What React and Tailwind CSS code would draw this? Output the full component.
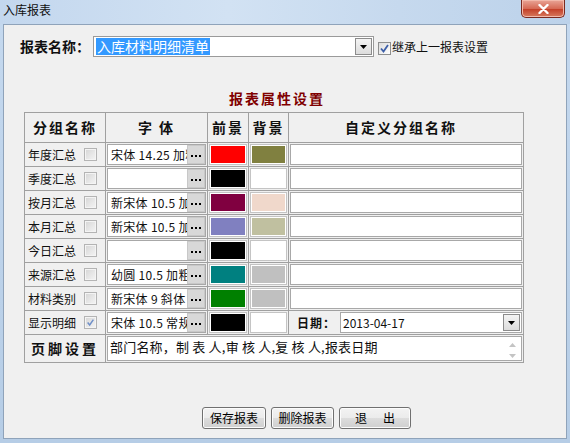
import React from "react";

const FONT = { fontFamily: '"Noto Sans CJK SC", "Liberation Sans", sans-serif' };

const rows = [
  { name: "年度汇总", font: "宋体 14.25 加粗", fg: "bg-[#ff0000]", bg: "bg-[#808040]" },
  { name: "季度汇总", font: "", fg: "bg-black", bg: "bg-white" },
  { name: "按月汇总", font: "新宋体 10.5 加粗", fg: "bg-[#800040]", bg: "bg-[#f0d8cb]" },
  { name: "本月汇总", font: "新宋体 10.5 加粗", fg: "bg-[#8080c0]", bg: "bg-[#c0c0a0]" },
  { name: "今日汇总", font: "", fg: "bg-black", bg: "bg-white" },
  { name: "来源汇总", font: "幼圆 10.5 加粗", fg: "bg-[#008080]", bg: "bg-[#c0c0c0]" },
  { name: "材料类别", font: "新宋体 9 斜体", fg: "bg-[#008000]", bg: "bg-[#c0c0c0]" },
  { name: "显示明细", font: "宋体 10.5 常规", fg: "bg-black", bg: "bg-white", checked: true, date: true },
];

function CheckMark({ color }) {
  return (
    <svg width="11" height="11" viewBox="0 0 11 11">
      <path d="M2 5.5 L4.5 8.5 L9 2" fill="none" stroke={color} strokeWidth="1.8" />
    </svg>
  );
}

function Check({ checked, dim }) {
  if (dim) {
    return (
      <span className="inline-flex w-[13px] h-[13px] shrink-0 items-center justify-center border border-[#b4b4b4] bg-[#f4f4f4]">
        <span className="flex w-[9px] h-[9px] items-center justify-center bg-[linear-gradient(135deg,#d8d8d8,#f2f2f2)]">
          {checked ? <CheckMark color="#6f8fc8" /> : null}
        </span>
      </span>
    );
  }
  return (
    <span className="inline-flex w-[13px] h-[13px] shrink-0 items-center justify-center border border-[#8e8f8f] bg-white">
      <span className="flex w-[11px] h-[11px] items-center justify-center bg-[linear-gradient(135deg,#dcdcdc,#ffffff)]">
        {checked ? <CheckMark color="#3d5fa8" /> : null}
      </span>
    </span>
  );
}

function DropArrow() {
  return (
    <svg width="7" height="4" viewBox="0 0 7 4">
      <path d="M0 0 H7 L3.5 4 Z" fill="#000" />
    </svg>
  );
}

function DropBtn() {
  return (
    <span className="flex w-[17px] h-[17px] items-center justify-center border border-[#8c8c8c] bg-[linear-gradient(to_bottom,#f4f4f4,#dcdcdc)]">
      <DropArrow />
    </span>
  );
}

function Dots() {
  return (
    <span className="flex w-[18px] h-[19px] shrink-0 items-center justify-center gap-[2px] border border-[#c8c8c8] bg-[#d8d8d8] pt-[3px]">
      <span className="w-[2px] h-[2px] bg-black" />
      <span className="w-[2px] h-[2px] bg-black" />
      <span className="w-[2px] h-[2px] bg-black" />
    </span>
  );
}

function Btn({ w, children }) {
  return (
    <button className={"flex h-[22px] items-center justify-center rounded-[3px] border border-[#707070] bg-[linear-gradient(to_bottom,#f3f3f3_0%,#ebebeb_50%,#dddddd_51%,#cfcfcf_100%)] text-[12px] text-black shadow-[inset_0_0_0_1px_#fcfcfc] " + w}>
      {children}
    </button>
  );
}

const headCls = "flex items-center justify-center bg-[#f0f0f0] text-[14px] font-bold tracking-[2px] text-[#101010]";

export default function App() {
  return (
    <div style={FONT} className="flex w-[570px] h-[443px] flex-col bg-[linear-gradient(to_bottom,#c5d9ef,#b6cde6)] overflow-hidden">
      {/* Title bar */}
      <div className="flex h-[24px] shrink-0 items-start bg-[linear-gradient(to_right,#c3d7ee,#d2e2f3_40%,#c6d9ee_70%,#bcd2ea)]">
        <span className="pl-[3px] pt-[3px] text-[12px] leading-[14px] text-[#101010]">入库报表</span>
        <span className="flex-1" />
        <span className="mr-[5px] flex w-[44px] h-[18px] items-center justify-center rounded-b-[5px] border border-t-0 border-[#7a2a20] bg-[linear-gradient(to_bottom,#e9a597,#d66a55_50%,#c4412a_55%,#d77a5e)] shadow-[inset_0_0_0_1px_#f2b9ab]">
          <svg width="11" height="10" viewBox="0 0 11 10">
            <path d="M1.5 1 L9.5 9 M9.5 1 L1.5 9" stroke="#ffffff" strokeWidth="2.4" strokeLinecap="round" />
          </svg>
        </span>
      </div>

      {/* Client area */}
      <div className="mx-[3px] mb-[4px] flex flex-1 flex-col border border-[#8fa3ba] bg-[#f0f0f0]">
        {/* Report name row */}
        <div className="mt-[11px] flex h-[21px] items-center pl-[16px]">
          <span className="w-[73px] text-[14px] font-bold text-[#101010] leading-[21px]">报表名称：</span>
          <div className="flex w-[281px] h-[21px] items-center border border-[#9a9a9a] bg-white pl-[2px] pr-px">
            <span className="bg-[#3399ff] px-px text-[14px] leading-[17px] text-white">入库材料明细清单</span>
            <span className="flex-1" />
            <DropBtn />
          </div>
          <span className="ml-[4px]"><Check checked /></span>
          <span className="ml-[1px] text-[12px] text-[#101010]">继承上一报表设置</span>
        </div>

        {/* Section title */}
        <div className="ml-[20px] mt-[31px] w-[500px] h-[20px] text-center pl-[6px] text-[14px] font-bold leading-[20px] tracking-[2px] text-[#800000]">
          报表属性设置
        </div>

        {/* Table */}
        <div className="ml-[20px] mt-[4px] grid w-[500px] grid-cols-[80px_101px_40px_39px_234px] grid-rows-[29px_repeat(8,23px)_27px] gap-px border border-[#a0a0a0] bg-[#a0a0a0]">
          <div className={headCls}>分组名称</div>
          <div className={headCls}>字 体</div>
          <div className={headCls}>前景</div>
          <div className={headCls}>背景</div>
          <div className={headCls + " pr-[10px]"}>自定义分组名称</div>

          {rows.map((r) => (
            <React.Fragment key={r.name}>
              <div className="flex items-center bg-[#f0f0f0] pl-[3px] pr-[8px]">
                <span className="text-[12px] text-[#101010]">{r.name}</span>
                <span className="flex-1" />
                <Check dim checked={r.checked} />
              </div>
              <div className="flex bg-[#f0f0f0] p-px">
                <div className="flex flex-1 items-center overflow-hidden border border-[#a8a8a8] bg-white">
                  <span className="min-w-0 flex-1 overflow-hidden whitespace-nowrap pl-[3px] text-[12px] tracking-[0.3px] text-[#101010]">{r.font}</span>
                  <Dots />
                </div>
              </div>
              <div className="flex bg-[#f0f0f0] p-px">
                <div className="flex flex-1 border border-[#c4c4c4] bg-white p-px">
                  <div className={"flex-1 " + r.fg} />
                </div>
              </div>
              <div className="flex bg-[#f0f0f0] p-px">
                <div className="flex flex-1 border border-[#c4c4c4] bg-white p-px">
                  <div className={"flex-1 " + r.bg} />
                </div>
              </div>
              <div className="flex bg-[#f0f0f0] p-px">
                {r.date ? (
                  <div className="flex flex-1 items-center">
                    <span className="w-[50px] pl-[7px] text-[12px] font-bold tracking-[1px] text-[#101010]">日期：</span>
                    <div className="flex h-full flex-1 items-center border border-[#a8a8a8] bg-white pl-[2px] pr-px">
                      <span className="flex-1 text-[12px] text-[#101010]">2013-04-17</span>
                      <DropBtn />
                    </div>
                  </div>
                ) : (
                  <div className="flex-1 border border-[#a8a8a8] bg-white" />
                )}
              </div>
            </React.Fragment>
          ))}

          <div className={headCls + " tracking-[3px]"}>页脚设置</div>
          <div className="col-span-4 flex bg-[#f0f0f0] p-px">
            <div className="flex flex-1 border border-[#a8a8a8] bg-white">
              <span className="flex-1 pl-[2px] pt-px text-[13px] leading-[18px] tracking-[0.2px] text-[#101010]">
                部门名称，制 表 人,审 核 人,复 核 人,报表日期
              </span>
              <span className="flex w-[17px] flex-col items-center gap-[7px] pt-[6px]">
                <svg width="7" height="4" viewBox="0 0 7 4"><path d="M0 4 H7 L3.5 0 Z" fill="#c4c4c4" /></svg>
                <svg width="7" height="4" viewBox="0 0 7 4"><path d="M0 0 H7 L3.5 4 Z" fill="#c4c4c4" /></svg>
              </span>
            </div>
          </div>
        </div>

        {/* Buttons */}
        <div className="mt-[44px] flex gap-[5px] pl-[198px]">
          <Btn w="w-[64px]">保存报表</Btn>
          <Btn w="w-[63px]">删除报表</Btn>
          <Btn w="w-[72px] gap-[16px]">
            <span>退</span>
            <span>出</span>
          </Btn>
        </div>
      </div>
    </div>
  );
}
